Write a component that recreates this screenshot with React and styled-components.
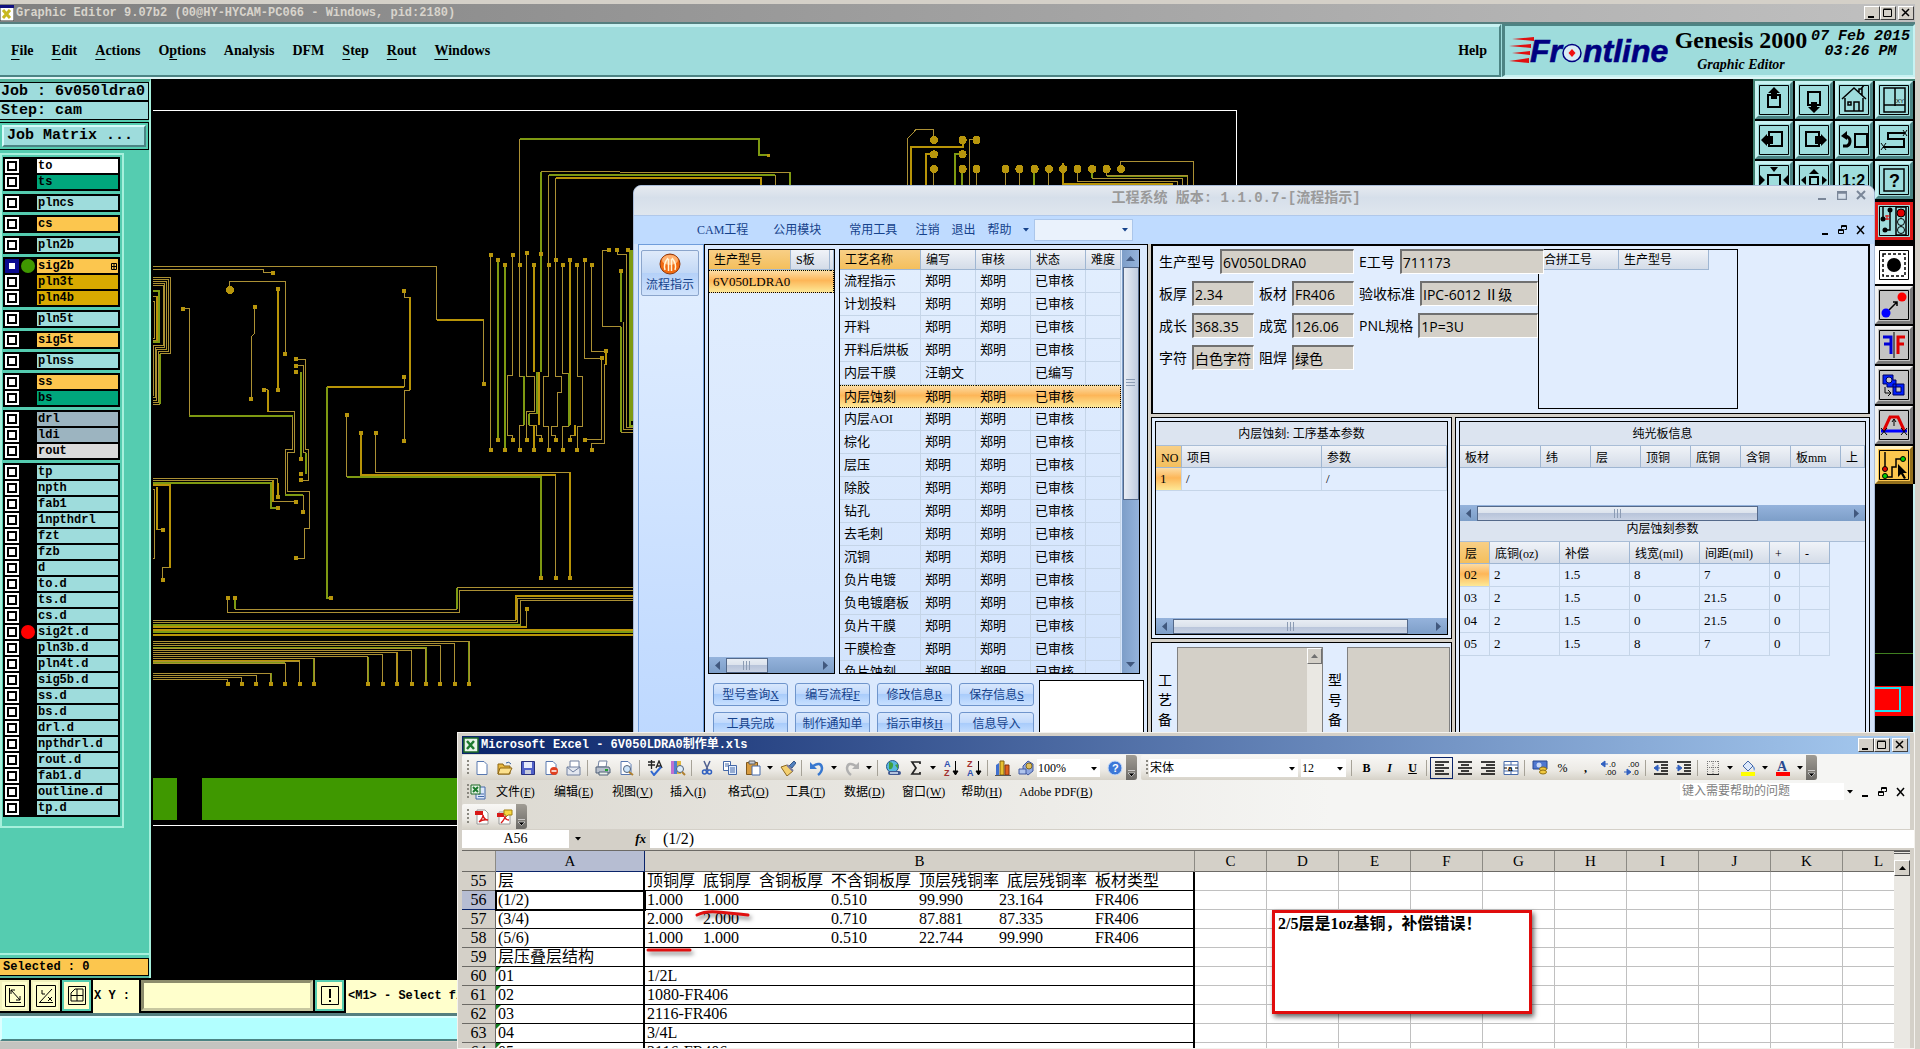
import React from "react";
import styled, { createGlobalStyle, css } from "styled-components";

const serif = `"Liberation Serif", "Noto Sans CJK SC", serif`;
const mono = `"Liberation Mono", "Noto Sans CJK SC", monospace`;
const sans = `"Open Sans", "Noto Sans CJK SC", sans-serif`;

const GlobalStyle = createGlobalStyle`
  *, *::before, *::after { box-sizing: border-box; }
  body { margin: 0; background: #000; overflow: hidden; }
  button, input, select, textarea { font: inherit; color: inherit; margin: 0; padding: 0; border: 0; border-radius: 0; background: none; }
  table { border-collapse: separate; border-spacing: 0; table-layout: fixed; }
  th { font-weight: normal; text-align: left; }
  th, td { padding: 0; }
  svg { display: block; flex: none; }
`;

/* ---------- data ---------- */

const layerColors = {
  white: "#ffffff",
  green: "#00a67c",
  aqua: "#9edcdc",
  orange: "#fcc64e",
  gold: "#d8aa00",
  slate: "#9cb4c0",
  grey: "#dadada",
};

const layerGroups = [
  [["to", "white"], ["ts", "green"]],
  [["plncs", "aqua"]],
  [["cs", "orange"]],
  [["pln2b", "aqua"]],
  [["sig2b", "orange", "#3f9800"], ["pln3t", "gold"], ["pln4b", "gold"]],
  [["pln5t", "aqua"]],
  [["sig5t", "orange"]],
  [["plnss", "aqua"]],
  [["ss", "orange"], ["bs", "green"]],
  [["drl", "slate"], ["ldi", "slate"], ["rout", "grey"]],
  [
    ["tp", "aqua"], ["npth", "aqua"], ["fab1", "aqua"], ["1npthdrl", "aqua"],
    ["fzt", "aqua"], ["fzb", "aqua"], ["d", "aqua"], ["to.d", "aqua"],
    ["ts.d", "aqua"], ["cs.d", "aqua"], ["sig2t.d", "aqua", "#ff0000"],
    ["pln3b.d", "aqua"], ["pln4t.d", "aqua"], ["sig5b.d", "aqua"],
    ["ss.d", "aqua"], ["bs.d", "aqua"], ["drl.d", "aqua"],
    ["npthdrl.d", "aqua"], ["rout.d", "aqua"], ["fab1.d", "aqua"],
    ["outline.d", "aqua"], ["tp.d", "aqua"],
  ],
];

const genesisMenu = [
  ["", "F", "ile"], ["", "E", "dit"], ["", "A", "ctions"], ["O", "p", "tions"],
  ["Analysis", "", ""], ["DFM", "", ""], ["", "S", "tep"], ["", "R", "out"], ["", "W", "indows"],
];

const steps = [
  ["流程指示", "郑明", "郑明", "已审核"],
  ["计划投料", "郑明", "郑明", "已审核"],
  ["开料", "郑明", "郑明", "已审核"],
  ["开料后烘板", "郑明", "郑明", "已审核"],
  ["内层干膜", "汪朝文", "", "已编写"],
  ["内层蚀刻", "郑明", "郑明", "已审核"],
  ["内层AOI", "郑明", "郑明", "已审核"],
  ["棕化", "郑明", "郑明", "已审核"],
  ["层压", "郑明", "郑明", "已审核"],
  ["除胶", "郑明", "郑明", "已审核"],
  ["钻孔", "郑明", "郑明", "已审核"],
  ["去毛刺", "郑明", "郑明", "已审核"],
  ["沉铜", "郑明", "郑明", "已审核"],
  ["负片电镀", "郑明", "郑明", "已审核"],
  ["负电镀磨板", "郑明", "郑明", "已审核"],
  ["负片干膜", "郑明", "郑明", "已审核"],
  ["干膜检查", "郑明", "郑明", "已审核"],
  ["负片蚀刻", "郑明", "郑明", "已审核"],
];

const actions = [
  ["型号查询", "X"], ["编写流程", "F"], ["修改信息", "R"], ["保存信息", "S"],
  ["工具完成", ""], ["制作通知单", ""], ["指示审核", "H"], ["信息导入", ""],
];

const etchRows = [
  ["02", "2", "1.5", "8", "7", "0", ""],
  ["03", "2", "1.5", "0", "21.5", "0", ""],
  ["04", "2", "1.5", "0", "21.5", "0", ""],
  ["05", "2", "1.5", "8", "7", "0", ""],
];

const excelMenu = [
  ["文件", "F"], ["编辑", "E"], ["视图", "V"], ["插入", "I"], ["格式", "O"],
  ["工具", "T"], ["数据", "D"], ["窗口", "W"], ["帮助", "H"], ["Adobe PDF", "B"],
];

const sheetRows = [
  { n: 55, a: "层", head: ["顶铜厚", "底铜厚", "含铜板厚", "不含铜板厚", "顶层残铜率", "底层残铜率", "板材类型"] },
  { n: 56, a: "(1/2)", nums: ["1.000", "1.000", "", "0.510", "99.990", "23.164", "FR406"] },
  { n: 57, a: "(3/4)", nums: ["2.000", "2.000", "", "0.710", "87.881", "87.335", "FR406"] },
  { n: 58, a: "(5/6)", nums: ["1.000", "1.000", "", "0.510", "22.744", "99.990", "FR406"] },
  { n: 59, a: "层压叠层结构", b: "" },
  { n: 60, a: "01", b: "1/2L", flag: true },
  { n: 61, a: "02", b: "1080-FR406", flag: true },
  { n: 62, a: "03", b: "2116-FR406", flag: true },
  { n: 63, a: "04", b: "3/4L", flag: true },
  { n: 64, a: "05", b: "2116-FR406", flag: true },
];

/* ---------- shared parts ---------- */

const WinButton = styled.button`
  display: flex;
  align-items: center;
  justify-content: center;
  width: 16px;
  height: 14px;
  background: #d4d0c8;
  border: 1px solid;
  border-color: #fff #404040 #404040 #fff;
`;

const WinButtons = styled.div`
  display: flex;
  margin-left: auto;
  & > :last-child { margin-left: 2px; }
`;

const ClassicButtons = () => (
  <WinButtons>
    <WinButton aria-label="Minimize">
      <svg width="10" height="10" viewBox="0 0 10 10"><path d="M1 8h6v2H1z" /></svg>
    </WinButton>
    <WinButton aria-label="Maximize">
      <svg width="10" height="10" viewBox="0 0 10 10"><path d="M.5 1.5h8v7h-8zM.5 1h8" fill="none" stroke="#000" /></svg>
    </WinButton>
    <WinButton aria-label="Close">
      <svg width="10" height="10" viewBox="0 0 10 10"><path d="M1 1l7 7M8 1l-7 7" stroke="#000" strokeWidth="1.5" /></svg>
    </WinButton>
  </WinButtons>
);

const MdiButton = styled.button`
  width: 18px;
  height: 16px;
  display: flex;
  justify-content: center;
  align-items: center;
`;

const MdiButtons = () => (
  <>
    <MdiButton aria-label="Minimize sheet">
      <svg width="10" height="10"><path d="M2 8h6v2H2z" /></svg>
    </MdiButton>
    <MdiButton aria-label="Restore sheet">
      <svg width="10" height="10" fill="none" stroke="#000">
        <path d="M3.5 3.5v-3h5v4h-2M3 1.5h6M.5 4.5h5v4h-5zM1 5.5h5" />
      </svg>
    </MdiButton>
    <MdiButton aria-label="Close sheet">
      <svg width="10" height="10"><path d="M1 1l7 8M8 1l-7 8" stroke="#000" strokeWidth="1.5" /></svg>
    </MdiButton>
  </>
);

/* ---------- Genesis window ---------- */

const Desktop = styled.main`
  position: relative;
  height: 100vh;
  overflow: hidden;
  display: flex;
  flex-direction: column;
  background: #d4d0c8;
  padding-right: 5px;
`;

const GenesisTitle = styled.header`
  display: flex;
  align-items: center;
  height: 24px;
  flex: none;
  border-top: 4px solid #d4d0c8;
  border-bottom: 2px solid #557f7f;
  background: linear-gradient(90deg, #808080, #c0c0c0);
  color: #d8d4cc;
  font: bold 12px/18px ${mono};
  gap: 2px;
  padding-right: 1px;
`;

const GenesisHeader = styled.div`
  display: flex;
  height: 55px;
  flex: none;
  background: #9edcdc;
  border-bottom: 2px solid #dff6f6;
`;

const MenuBar = styled.nav`
  flex: 1;
  display: flex;
  align-items: center;
  gap: 18px;
  padding: 0 12px 0 11px;
  border-top: 3px solid #c8f2f2;
  border-bottom: 2px solid #4c8484;
  border-right: 2px solid #4c8484;
  font: bold 14px/18px ${serif};
`;

const MenuItem = styled.button`
  height: 20px;
  text-underline-offset: 4px;
  &:last-child { margin-left: auto; }
`;

const Brand = styled.div`
  display: flex;
  width: 413px;
  margin-left: 1px;
  padding-left: 4px;
  border: 2px solid;
  border-color: #4c8484 #c8f2f2 #c8f2f2 #4c8484;
  border-left-width: 3px;
`;

const BrandName = styled.div`
  width: 140px;
  padding-top: 1px;
  text-align: center;
  font: bold 24px/26px ${serif};
  em { display: block; font-size: 14px; line-height: 24px; }
`;

const Clock = styled.time`
  text-align: center;
  white-space: nowrap;
  font: italic bold 15px/15px ${mono};
  padding-top: 3px;
`;

const GenesisBody = styled.div`
  flex: 1;
  min-height: 0;
  display: flex;
  background: #000;
`;

const LeftPanel = styled.aside`
  width: 151px;
  flex: none;
  display: flex;
  flex-direction: column;
  background: #55ccb0;
  border-right: 2px solid #a6f0dc;
  border-top: 3px solid #54b49c;
  font: bold 15px/18px ${mono};
  color: #000;
`;

const JobLine = styled.div`
  height: 19px;
  padding-left: 1px;
  white-space: pre;
  background: #9edcdc;
  border: 1px solid #000;
  border-left: 0;
  line-height: 18px;
`;

const MatrixFrame = styled.div`
  margin: 2px 0 0 0;
  padding: 2px;
  height: 28px;
  border: 1px solid #000;
  border-left: 0;
`;

const MatrixButton = styled.button`
  width: 100%;
  height: 22px;
  padding-left: 3px;
  text-align: left;
  background: #9edcdc;
  border: 2px solid;
  border-color: #d4fafa #4c8484 #4c8484 #d4fafa;
`;

const LayerBox = styled.div`
  width: 122px;
  margin: 4px 0 0 1px;
  padding: 2px 2px 9px 1px;
  display: flex;
  flex-direction: column;
  gap: 3px;
  border: 1px solid #000;
  outline: 2px solid #a6f0dc;
  outline-offset: -1px;
  background: #55ccb0;
`;

const LayerGroup = styled.div`
  background: #000;
  padding: 1px;
`;

const LayerRow = styled.label`
  display: grid;
  grid-template-columns: 14px 18px 1fr;
  align-items: center;
  height: 16px;
  padding: 0 1px;
  font: bold 12px/14px ${mono};
`;

const LayerCheck = styled.input`
  appearance: none;
  width: 14px;
  height: 14px;
  background: #fff;
  border: 2px solid ${(p) => (p.$active ? "#0a0a90" : "#fff")};
  box-shadow: inset 0 0 0 2px ${(p) => (p.$active ? "#0a0a90" : "#000")};
`;

const LayerDot = styled.span`
  justify-self: center;
  width: 14px;
  height: 14px;
  border-radius: 50%;
  background: ${(p) => p.$color || "transparent"};
`;

const LayerName = styled.span`
  display: flex;
  justify-content: space-between;
  align-items: center;
  height: 14px;
  padding: 0 1px;
  background: ${(p) => layerColors[p.$tone]};
`;

const Selected = styled.div`
  margin: auto 0 0;
  height: 25px;
  padding: 3px 0;
  border-top: 2px solid #a6f0dc;
  border-bottom: 2px solid #54b49c;
  font: bold 12px/16px ${mono};
  span { display: block; padding-left: 3px; background: #fcc64e; border: 1px solid #000; border-left: 0; }
`;

const Board = styled.svg`
  flex: 1;
  min-width: 0;
  height: 100%;
  overflow: hidden;
  shape-rendering: crispEdges;
  path { fill: none; vector-effect: non-scaling-stroke; }
`;

const ToolColumn = styled.aside`
  width: 162px;
  display: flex;
  flex-direction: column;
  border-left: 2px solid #3f7f70;
  border-top: 2px solid #3f7f70;
`;

const ToolGrid = styled.div`
  display: grid;
  grid-template-columns: repeat(4, 38px);
  gap: 2px;
`;

const ToolStack = styled.div`
  display: grid;
  grid-template-columns: 38px;
  gap: 2px;
  margin-left: auto;
  margin-right: 2px;
  margin-top: 3px;
  & > :first-child { margin-bottom: 4px; }
`;

const Tool = styled.button`
  display: flex;
  align-items: center;
  justify-content: center;
  width: 38px;
  height: 38px;
  background: ${(p) => p.$bg || "#9edcdc"};
  border: 3px solid;
  border-color: ${(p) => p.$edge || "#c8f2f2 #4c8484 #4c8484 #c8f2f2"};
`;

const Radar = styled.svg`
  flex: 1;
  width: 100%;
  min-height: 0;
  border-right: 2px solid #c8f2f2;
`;

const StatusBar = styled.footer`
  display: flex;
  height: 35px;
  flex: none;
  background: #000;
  border-top: 2px solid #000;
  gap: 2px;
  font: bold 12px/32px ${mono};
`;

const StatusButton = styled.button`
  display: flex;
  align-items: center;
  justify-content: center;
  width: 29px;
  height: 31px;
  background: #ffffcc;
  border: 2px solid ${(p) => (p.$on ? "#55ccb0" : "#f2f2bc")};
`;

const CoordLabel = styled.label`
  width: 46px;
  padding-left: 1px;
  background: #ffffcc;
  white-space: pre;
`;

const CoordInput = styled.input`
  width: 172px;
  height: 31px;
  background: #ffffcc;
  border: 3px solid;
  border-color: #8c8c6c #c8c8a0 #c8c8a0 #8c8c6c;
`;

const StatusText = styled.div`
  flex: 1;
  padding-left: 2px;
  background: #ffffcc;
`;

const MessageBar = styled.div`
  height: 36px;
  flex: none;
  border-top: 3px solid #557f7f;
  border-bottom: 7px solid #c4c4c0;
  div { height: 25px; background: #b2ffff; border: 2px solid; border-color: #dff #4c8484 #4c8484 #dff; }
`;

const toolIcons = {
  up: <><path d="M9 10h12v12H9z" fill="none" stroke="#000" strokeWidth="2" /><path d="M12 14V8H9l6-6 6 6h-3v6z" /></>,
  down: <><path d="M9 7h12v13H9z" fill="none" stroke="#000" strokeWidth="2" /><path d="M12 17h6v5h3l-6 6-6-6h3z" /></>,
  home: <path d="M3 14L15 3l12 11M6 13v13h18V13M9 17h3v3H9zM15 26v-9h5v9M20 8V4h3v6M22 4l3-4" fill="none" stroke="#000" strokeWidth="1.5" />,
  layout: <><path d="M5 3h21v24H5zM16 3v18M5 20h21" fill="none" stroke="#000" strokeWidth="1.5" /><text x="17" y="18" fontSize="6" fontFamily="Liberation Sans">XY</text></>,
  left: <><path d="M10 7h13v14H10z" fill="none" stroke="#000" strokeWidth="2" /><path d="M2 15l6-6v2h6v8H8v2z" /></>,
  right: <><path d="M7 7h13v14H7z" fill="none" stroke="#000" strokeWidth="2" /><path d="M28 15l-6-6v2h-6v8h6v2z" /></>,
  undo: <><path d="M16 9h12v13H16z" fill="none" stroke="#000" strokeWidth="2" /><path d="M4 21h4q3-1 3-5t-5-5" fill="none" stroke="#000" strokeWidth="3" /><path d="M2 11l6-5v9z" /></>,
  trace: <><path d="M26 8H9v6h16v8H4" fill="none" stroke="#000" strokeWidth="2" /><path d="M24 5l4 6m0-6l-4 6M2 18l5 7m0-7l-5 7" stroke="#000" /></>,
  fit: <><path d="M9 10h12v14H9z" fill="none" stroke="#000" strokeWidth="2" /><path d="M11 2h8l-4 5zM1 10l5 5-5 5zM29 10l-5 5 5 5zM11 29h8l-4-4z" /></>,
  expand: <><path d="M11 12h8v8h-8z" fill="none" stroke="#000" strokeWidth="2" /><path d="M10 9l5-5 5 5zM7 11v9l-5-5zM23 11v9l5-5zM10 23l5 5 5-5z" /></>,
  ratio: <text x="3" y="21" fontSize="16" fontWeight="bold" fontFamily="Liberation Sans">1:2</text>,
  help: <><path d="M5 4h20v22H5z" fill="none" stroke="#000" strokeWidth="1.5" /><text x="10" y="22" fontSize="18" fontWeight="bold" fontFamily="Liberation Sans">?</text></>,
  signal: <><path d="M4 1v12M11 5v19H6M17 1h10v28H17z" fill="none" stroke="#000" strokeWidth="1.5" /><path d="M6 10h5M6 13h5M8 9v5" stroke="#e00000" /><circle cx="4" cy="13" r="2.5" /><circle cx="11" cy="4" r="2.5" /><circle cx="6" cy="24" r="2.5" /><circle cx="22" cy="7" r="4" fill="#e00000" stroke="#000" /><circle cx="22" cy="16" r="3.5" fill="none" stroke="#000" /><circle cx="22" cy="24" r="3.5" fill="none" stroke="#000" /></>,
  pad: <><path d="M4 4h22v22H4z" fill="none" stroke="#000" strokeWidth="1.5" strokeDasharray="3 2" /><circle cx="15" cy="15" r="7" /></>,
  points: <><path d="M10 20l8-8m-4 0h4v4" fill="none" stroke="#000" strokeWidth="1.5" /><circle cx="7" cy="23" r="4.5" fill="#0000ff" /><circle cx="23" cy="7" r="4.5" fill="#ff0000" /></>,
  mirror: <><path d="M15 2v26" stroke="#000" /><path d="M4 7h8v17M12 14H5" fill="none" stroke="#0000d8" strokeWidth="3" /><path d="M26 7h-7v17M19 14h6" fill="none" stroke="#e00000" strokeWidth="3" /></>,
  copy: <><path d="M4 5h10v5h3v7H8v-3H4zM14 14h11v11H14z" fill="#0020ff" stroke="#000060" /><circle cx="10" cy="10" r="3" fill="#c4c4c4" stroke="#000060" /><path d="M17 17h5v5h-5z" fill="#c4c4c4" stroke="#000060" /><path d="M6 17v6h5M9 20l3 3-3 3" fill="none" stroke="#000" /></>,
  curve: <><path d="M2 21h26" stroke="#0000ff" strokeWidth="3" /><path d="M5 20l6-13h8l6 13" fill="none" stroke="#e00000" strokeWidth="3" /><path d="M15 16V9m-2 3l2-3 2 3M2 18l6 7m0-7l-6 7M22 18l6 7m0-7l-6 7" stroke="#000" fill="none" /></>,
  route: <><path d="M6 2v16M6 27h7V17h4V9h8" fill="none" stroke="#000" strokeWidth="1.5" /><circle cx="6" cy="19" r="2.5" fill="#e00000" stroke="#000" /><circle cx="6" cy="26" r="2.5" fill="#00d000" stroke="#000" /><circle cx="24" cy="9" r="2.5" fill="#00d000" stroke="#000" /><path d="M19 14l9 9-4 0 3 5-2 1-3-5-3 3z" /></>,
};

const GenesisTool = ({ icon, ...rest }) => (
  <Tool aria-label={icon} {...rest}>
    <svg width="30" height="30" viewBox="0 0 30 30">
      <path d="M.5 .5h29v29H.5z" fill="none" stroke="#000" />
      {toolIcons[icon]}
    </svg>
  </Tool>
);

const busLines = [
  [1415, 988], [1420, 944], [1426, 901], [1432, 858], [1438, 815], [1443, 771], [1449, 728], [1455, 684],
  [1460, 523], [1466, 479], [1472, 436], [1498, 393], [1504, 349], [1510, 306], [1515, 263],
];

const leftPads = [
  [398, 451], [436, 664], [128, 545], [344, 542], [334, 780], [415, 495], [415, 759], [371, 757],
  [793, 498], [793, 725], [793, 892], [1031, 742], [573, 1301], [467, 677], [467, 694], [467, 712],
  [484, 939], [484, 977], [484, 993], [490, 1077], [469, 1197], [415, 1038], [469, 1050], [415, 1067],
  [68, 1123], [68, 1255], [620, 823], [664, 870], [707, 870], [1204, 1248], [1247, 1248], [1291, 1248],
  [263, 1301], [286, 1301], [1160, 1329], [1052, 406], [1075, 417], [1096, 432], [1118, 406], [1139, 432],
  [1160, 401], [1183, 432], [1204, 403], [1226, 432], [1247, 417], [1269, 432], [1291, 417], [1312, 432],
  [1334, 417], [1355, 432], [1408, 392], [1432, 392], [1464, 392], [1444, 448], [1398, 657], [1385, 675],
  [1075, 888], [1118, 888], [1160, 888], [1204, 888], [1247, 888], [1291, 888], [1334, 888],
  [1052, 915], [1096, 915], [1139, 915], [1183, 915], [1226, 915], [1269, 915], [1312, 915], [1355, 915],
];

const bigPads = [
  [724, 150], [790, 150], [822, 150], [724, 193], [790, 193], [724, 237], [790, 237], [822, 237],
  [889, 237], [921, 237], [956, 237], [989, 237], [1022, 237], [1055, 237], [1089, 237], [1122, 237], [1155, 237],
];

const dots = (list) => list.map(([x, y]) => `M${x} ${y}h0.01`).join("");

const BoardView = () => (
  <Board aria-label="Board artwork">
    <g transform="translate(-151 -79)">
      <path d="M153 110.5H1236.5V825.5H153" stroke="#fff" />
      <path d="M153 799H177M202 799H1100" stroke="#3f9800" strokeWidth="42" />
      <g transform="matrix(.33333 0 0 .3827 140 100)">
        <g stroke="#ab9034" strokeWidth="1">
          <path d="M39 435H890V574H1031V742M39 443H371V451H398M270 490V474H436V664M128 545H148V825" />
          <path d="M458 825V914H436V1032M490 1032V1077M344 542V610L334 618V780" />
          <path d="M371 757H384V814H463V922H442V1023H508V1119H493V1197H469" />
          <path d="M793 498V515H810V759H793V892M793 725V750" />
          <path d="M467 677H497V914H505V993H484M467 694H491V922H499" />
          <path d="M39 463H91V663H61M61 795H39M39 469H85V658H56V790H39M39 474H80V652H51V784H39M39 480H75V647H46V778H39M39 486H70V641H42V772H39" />
          <path d="M39 513H53V628H39M39 526H44V622H39" />
          <path d="M39 990H414V1040M39 995H400V1050H469M39 1018H44V1197H39M90 1222H68V1255M51 1123H68" />
          <path d="M707 870V973H1290V1248M1247 979V1248M620 823V985" />
          <path d="M263 1301V1339H958V1282H1480M286 1331H950M950 1274H1480" />
          <path d="M39 1360H1128V1296H1480M39 1366H1134V1302H1480M1142 1372V1308H1480M1160 1378V1329" />
          <path d="M1052 406V915M1118 406V721H1103V877H1118V888M1139 432V102M1139 432V722H1153M1153 850H1139V915" />
          <path d="M1160 401V722H1184V815H1160V888M1190 820H1167M1167 850H1190V877H1204V888" />
          <path d="M1226 196V722H1210V853H1226V915M1247 203V722H1265V765H1253V853H1235V877H1247V888" />
          <path d="M1269 432V714H1286M1286 853H1269V915M1306 877H1291V888M1312 432V722H1328V853H1312V915" />
          <path d="M1334 417V675H1385V888H1334M1355 432V657H1398V692H1393V898H1355V915" />
          <path d="M1408 392H1387V592H1444M1444 868H1480M1450 580V862H1480M1432 392V403H1460V857H1480" />
          <path d="M1204 188H1440" />
        </g>
        <g stroke="#b89408" strokeWidth="2">
          <path d="M415 495V759M384 757V814M810 515V759M793 750H561M51 513V630M414 1000V1040M400 995V1050" />
          <path d="M39 1006H90V1222M51 1012V1123M663 870V979H1247M1290 973V1248M890 574H1031" />
          <path d="M39 1378H1160M39 1385H1480M39 1398H1480M1183 432V712M1197 712V850M1183 850V915M1291 417V850M1306 850V877" />
          <path d="M1247 203H1440M1398 657V692M39 1466H479M771 1443V1525M1128 1360V1296H1480" />
        </g>
        <g stroke="#7e9a12" strokeWidth="2">
          <path d="M148 825H458M484 712V939M499 922V977M561 750V1301H573M61 663V795M39 499H58V633H39M436 1032H490" />
          <path d="M39 1001H393V1067H415M620 985H1204V1248M286 1301V1331M950 1331V1274" />
          <path d="M1075 417V888M1096 432V915M1204 188V712M1139 102H1440M1226 196H1440M1153 722V850M1190 712V820M1167 820V850M1286 714V853" />
          <path d="M1444 448V580M1444 592V868M1470 392V852H1480M1477 392V840M39 1372H1142M39 1391H1480M39 1432H858V1525M39 1472H436M988 1415V1525M523 1460V1525M684 1455V1525M393 1498V1525" />
        </g>
        <path d={busLines.map(([y, x]) => `M39 ${y}H${x}V1525`).join("")} stroke="#ab9034" />
        <path d={dots(leftPads) + dots(busLines.map(([, x]) => [x, 1525]))} stroke="#b8960c" strokeWidth="4" strokeLinecap="square" />
        <path d="M270 496h0.01" stroke="#b8960c" strokeWidth="8" strokeLinecap="round" />
      </g>
      <g transform="matrix(.43367 0 0 .33333 620 90)">
        <path d="M0 147H320V195H345M0 255H358M392 247V286M772 286V191H790M789 286V237M954 237V286M1089 237V265M1122 259H1308" stroke="#7e9a12" strokeWidth="2" />
        <path d="M0 247H392M358 255V286M723 150V118H683L664 145V286M723 237V286M806 286V149H822M822 237V286M889 237V286M921 237V286M988 237V286" stroke="#ab9034" />
        <path d="M1055 237V274H1285V286M1089 265H1297V286M1122 237V257H1308V286M1155 237V214H1323V286" stroke="#ab9034" />
        <path d="M0 264H325V286M670 286V170H790V150M706 286V191H723M1022 220V283H1275" stroke="#b89408" strokeWidth="2" />
        <path d={dots(bigPads)} stroke="#b8960c" strokeWidth="8" strokeLinecap="round" />
        <path d={dots(bigPads)} stroke="#b8960c" strokeWidth="6" strokeLinecap="square" />
        <path d="M343 196h0.01" stroke="#b8960c" strokeWidth="3" strokeLinecap="square" />
      </g>
    </g>
  </Board>
);

const Logo = () => (
  <svg width="162" height="44" viewBox="0 0 162 44" aria-label="Frontline">
    <path d="M3 13l22-2v4zM0 20l22-2v4zM3 27l18-2v4zM0 35l20-3v5z" fill="#e01010" />
    <g fontFamily="Liberation Sans" fontWeight="bold" fontStyle="italic" fontSize="32" fill="#000080" stroke="#000080" strokeWidth=".6">
      <text x="21" y="36">Fr</text>
      <text x="74" y="36">ntline</text>
    </g>
    <ellipse cx="63" cy="27" rx="9" ry="8.500" fill="#d8ecf4" stroke="#000080" strokeWidth="1.500" />
    <path d="M63 23l3.500 4-3.500 4-3.500-4z" fill="#f01010" />
  </svg>
);

/* ---------- process window ---------- */

const FlowWindow = styled.section`
  position: absolute;
  left: 633px;
  right: 45px;
  top: 185px;
  bottom: 0;
  display: flex;
  flex-direction: column;
  padding: 0 4px;
  background: #d3e3fa;
  border: 1px solid #a9bcd8;
  border-radius: 8px 8px 0 0;
  overflow: hidden;
  font: 12px/16px ${serif};
  color: #000;
`;

const FlowTitle = styled.header`
  display: flex;
  align-items: center;
  justify-content: center;
  height: 30px;
  flex: none;
  margin: 0 -4px;
  padding: 0 36px 6px 0;
  background: linear-gradient(#e6eaf0, #d6dfea 40%, #dfe6ee);
  border-bottom: 1px solid #b0c8ea;
  color: #9a9a9a;
  font: bold 14px/18px ${mono};
`;

const FlowTitleButtons = styled.div`
  position: absolute;
  right: 8px;
  top: 3px;
  display: flex;
  gap: 9px;
  button { width: 10px; height: 12px; }
`;

const Ribbon = styled.nav`
  display: flex;
  align-items: center;
  height: 28px;
  flex: none;
  margin: 0 -4px;
  padding: 0 4px 0 63px;
  background: #bfdbff;
  color: #15428b;
`;

const RibbonItem = styled.button`
  margin-right: ${(p) => p.$gap || 12}px;
  line-height: 16px;
`;

const RibbonSelect = styled.span`
  position: relative;
  width: 99px;
  height: 22px;
  margin: 0 auto 0 5px;
  border: 1px solid #abc6ea;
  background: #eaf2fc;
  select { appearance: none; width: 100%; height: 100%; }
  svg { position: absolute; right: 4px; top: 8px; pointer-events: none; }
`;

const Arrow = ({ color = "#000" }) => (
  <svg width="6" height="4" viewBox="0 0 6 4"><path d="M0 0h6L3 3.5z" fill={color} /></svg>
);

const FlowBody = styled.div`
  flex: 1;
  min-height: 0;
  display: flex;
  background: #d4d0c8;
`;

const Outlook = styled.aside`
  width: 66px;
  flex: none;
  padding: 5px 2px;
  border: 1px solid #6f9ddb;
  background: linear-gradient(#e3efff, #c4dcff 50%, #a8ccff);
`;

const OutlookButton = styled.button`
  display: flex;
  flex-direction: column;
  align-items: center;
  gap: 2px;
  width: 58px;
  height: 46px;
  padding-top: 2px;
  border: 1px solid #8ba5cc;
  border-radius: 2px;
  background: linear-gradient(#dfeafa, #c2d8f6 50%, #b4d0f8 50%, #cfe2fc);
  color: #15428b;
`;

const StepArea = styled.div`
  width: 444px;
  flex: none;
  padding: 4px 3px 0;
  border: 1px solid #000;
  background: #dbe9fd;
  margin-right: 3px;
`;

const Lists = styled.div`
  display: flex;
  gap: 4px;
`;

const ListFrame = styled.div`
  display: flex;
  width: ${(p) => p.$w}px;
  height: 425px;
  flex-direction: ${(p) => p.$dir || "row"};
  border: 1px solid #000;
  background: linear-gradient(#e2eefe, #d3e4fd);
  overflow: hidden;
`;

const amber = css`
  background: linear-gradient(#fcdca4, #fdb658 45%, #fde896);
`;

const Grid = styled.table`
  width: ${(p) => (p.$w ? p.$w + "px" : "100%")};
  flex: none;
  th {
    height: ${(p) => p.$head || 20}px;
    padding-left: 5px;
    white-space: nowrap;
    overflow: hidden;
    line-height: 18px;
    vertical-align: bottom;
    background: linear-gradient(#f0f3f8, #d4dce8);
    border-right: 1px solid #9fb6d2;
    border-bottom: 1px solid #9fb6d2;
  }
  th[data-hot] { background: linear-gradient(#f8cf86, #f4bf5c); }
  td {
    height: 23px;
    padding-left: 4px;
    white-space: nowrap;
    overflow: hidden;
    font-size: 13px;
    line-height: 20px;
    border-right: 1px solid #c5d5e8;
    border-bottom: 1px solid #c5d5e8;
  }
  td[data-hot] { ${amber} }
`;

const StepRow = styled.tr`
  ${(p) => p.$current && css`
    td {
      ${amber}
      border-top: 1px dotted #000;
      border-bottom: 1px dotted #000;
      border-right-color: transparent;
    }
    td:last-child { border-right: 1px dotted #000; }
  `}
`;

const VTrack = styled.div`
  width: 17px;
  margin-left: auto;
  display: flex;
  flex-direction: column;
  align-items: center;
  background: linear-gradient(90deg, #7d9ec8, #95b3dc);
  padding-bottom: 5px;
`;

const VThumb = styled.div`
  width: 16px;
  height: 233px;
  margin: 5px 0 auto;
  display: flex;
  align-items: center;
  justify-content: center;
  border: 1px solid #54698a;
  background: linear-gradient(90deg, #e8edf4, #c0cce0);
`;

const HTrack = styled.div`
  display: flex;
  align-items: center;
  height: 16px;
  flex: none;
  padding: 0 6px;
  background: linear-gradient(#95b3dc, #7d9ec8);
  margin-top: ${(p) => p.$push ? "auto" : 0};
`;

const HThumb = styled.div`
  width: ${(p) => p.$w};
  height: 15px;
  margin: 0 auto 0 6px;
  display: flex;
  align-items: center;
  justify-content: center;
  border: 1px solid #54698a;
  background: linear-gradient(#e8edf4, #dbe2ec 50%, #b8c4da 50%, #c8d2e4);
`;

const HScroll = ({ size, push }) => (
  <HTrack $push={push}>
    <svg width="5" height="9"><path d="M5 0v9L0 4.5z" fill="#41587e" /></svg>
    <HThumb $w={size}>
      <svg width="8" height="9"><path d="M.5 0v9M3.5 0v9M6.5 0v9" stroke="#8c9cb4" /></svg>
    </HThumb>
    <svg width="5" height="9"><path d="M0 0v9l5-4.5z" fill="#41587e" /></svg>
  </HTrack>
);

const ActionArea = styled.div`
  display: flex;
  justify-content: space-between;
  margin-top: 6px;
  padding-left: 5px;
`;

const ActionGrid = styled.div`
  display: grid;
  grid-template-columns: repeat(4, 75px);
  gap: 6px 7px;
  align-content: start;
  padding-top: 3px;
`;

const ActionButton = styled.button`
  height: 23px;
  border: 1px solid #6f95cc;
  border-radius: 3px;
  background: linear-gradient(#d8e7fc, #c2dafc 45%, #a9ccfb 50%, #c8e0ff);
  color: #15428b;
  white-space: nowrap;
`;

const NoteArea = styled.textarea`
  display: block;
  width: 105px;
  height: 120px;
  border: 1px solid #000;
  background: #fff;
  resize: none;
`;

const Details = styled.div`
  flex: 1;
  min-width: 0;
  display: flex;
  flex-direction: column;
  gap: 3px;
`;

const TopPanel = styled.div`
  display: flex;
  height: 170px;
  flex: none;
  padding: 3px 0 0 6px;
  border: 2px solid #000;
  border-bottom-width: 1px;
  background: #e1edfe;
`;

const Form = styled.form`
  width: 379px;
  flex: none;
  display: flex;
  flex-direction: column;
  gap: 7px;
  font: 14px/20px ${sans};
`;

const FormRow = styled.div`
  display: flex;
  gap: 5px;
`;

const Field = styled.label`
  display: flex;
  align-items: center;
  gap: 5px;
  white-space: nowrap;
  flex: none;
`;

const FieldInput = styled.input`
  position: relative;
  width: ${(p) => p.$w}px;
  height: 25px;
  padding-left: 1px;
  background: #d4d0c8;
  border: 2px solid;
  border-color: #707070 #fff #fff #707070;
  border-right-width: 1px;
  border-bottom-width: 1px;
`;

const MergeBox = styled.div`
  width: 200px;
  height: 160px;
  border: 1px solid #000;
`;

const BottomPanels = styled.div`
  flex: 1;
  min-height: 0;
  display: flex;
  gap: 3px;
`;

const LeftStack = styled.div`
  width: 301px;
  flex: none;
  display: flex;
  flex-direction: column;
  gap: 3px;
`;

const Panel = styled.div`
  display: flex;
  flex: ${(p) => (p.$h ? "none" : 1)};
  height: ${(p) => (p.$h ? p.$h + "px" : "auto")};
  min-width: 0;
  padding: 3px;
  border: 1px solid #000;
  background: #e1edfe;
`;

const PanelInner = styled.div`
  flex: 1;
  min-width: 0;
  display: flex;
  flex-direction: column;
  border: 1px solid #000;
  overflow: hidden;
`;

const PanelTitle = styled.h2`
  margin: 0;
  height: ${(p) => (p.$low ? 21 : 24)}px;
  flex: none;
  text-align: center;
  font: 12px/16px ${serif};
  padding-top: ${(p) => (p.$low ? 0 : 4)}px;
  background: #dce4f0;
  border-bottom: 1px solid #a9bdd6;
`;

const Blank = styled.div`
  height: 37px;
  flex: none;
`;

const RemarkPanel = styled(Panel)`
  padding: 4px 0 0 6px;
  gap: 5px;
  font: 14px/20px ${sans};
  background: #e1edfe;
`;

const RemarkLabel = styled.label`
  width: 14px;
  padding-top: 23px;
  flex: none;
`;

const RemarkBox = styled.div`
  display: flex;
  width: ${(p) => p.$w}px;
  flex: none;
  height: 100%;
  background: #d4d0c8;
  border: 1px solid #808080;
  textarea { flex: 1; min-width: 0; resize: none; }
`;

const RemarkScroll = styled.div`
  width: 15px;
  background: #eae8e3;
  button {
    display: flex;
    align-items: center;
    justify-content: center;
    width: 15px;
    height: 16px;
    background: #d4d0c8;
    border: 1px solid;
    border-color: #fff #707070 #707070 #fff;
  }
`;

const FormField = ({ label, value, w }) => (
  <Field>
    {label}
    <FieldInput $w={w} defaultValue={value} />
  </Field>
);

const Cols = ({ widths }) => (
  <colgroup>
    {widths.map((w, i) => <col key={i} width={w || undefined} />)}
  </colgroup>
);

const ProcessWindow = () => (
  <FlowWindow>
    <FlowTitle>
      工程系统 版本: 1.1.0.7-[流程指示]
      <FlowTitleButtons>
        <button aria-label="Minimize"><svg width="8" height="10"><path d="M0 8h8v2H0z" fill="#7a8698" /></svg></button>
        <button aria-label="Maximize"><svg width="10" height="9"><path d="M.5.5h9v8h-9zM0 2h10" fill="none" stroke="#7a8698" strokeWidth="1.5" /></svg></button>
        <button aria-label="Close"><svg width="10" height="10"><path d="M1 1l8 8M9 1L1 9" stroke="#7a8698" strokeWidth="2" /></svg></button>
      </FlowTitleButtons>
    </FlowTitle>
    <Ribbon>
      <RibbonItem $gap={25}>CAM工程</RibbonItem>
      <RibbonItem $gap={28}>公用模块</RibbonItem>
      <RibbonItem $gap={18}>常用工具</RibbonItem>
      <RibbonItem>注销</RibbonItem>
      <RibbonItem>退出</RibbonItem>
      <RibbonItem>帮助</RibbonItem>
      <Arrow color="#15428b" />
      <RibbonSelect>
        <select aria-label="搜索"><option></option></select>
        <Arrow color="#15428b" />
      </RibbonSelect>
      <MdiButtons />
    </Ribbon>
    <FlowBody>
      <Outlook>
        <OutlookButton>
          <svg width="22" height="22" viewBox="0 0 22 22">
            <circle cx="11" cy="11" r="10" fill="#f26a10" stroke="#8c3a10" />
            <ellipse cx="11" cy="7" rx="8" ry="5" fill="#ffb070" />
            <path d="M6 17Q4 11 9 5M9.500 18V6M12.500 18V6M16 17q2-6-3-12" fill="none" stroke="#fff6d8" strokeWidth="1.500" />
          </svg>
          流程指示
        </OutlookButton>
      </Outlook>
      <StepArea>
        <Lists>
          <ListFrame $w={127} $dir="column">
            <Grid>
              <Cols widths={[82, 39, 0]} />
              <thead><tr><th data-hot="">生产型号</th><th>S板</th><th /></tr></thead>
              <tbody>
                <StepRow $current><td colSpan={2}>6V050LDRA0</td><td /></StepRow>
              </tbody>
            </Grid>
            <HScroll size="42px" push />
          </ListFrame>
          <ListFrame $w={301}>
            <Grid $w={281}>
              <Cols widths={[81, 55, 55, 55, 35]} />
              <thead>
                <tr><th data-hot="">工艺名称</th><th>编写</th><th>审核</th><th>状态</th><th>难度</th></tr>
              </thead>
              <tbody>
                {steps.map((row, i) => (
                  <StepRow key={row[0]} $current={i === 5}>
                    {row.map((cell, j) => <td key={j}>{cell}</td>)}
                    <td />
                  </StepRow>
                ))}
              </tbody>
            </Grid>
            <VTrack>
              <svg width="9" height="12"><path d="M0 11h9L4.500 6z" fill="#41587e" /></svg>
              <VThumb><svg width="9" height="9"><path d="M0 .5h9M0 3.500h9M0 6.500h9" stroke="#8c9cb4" /></svg></VThumb>
              <svg width="9" height="6"><path d="M0 0h9L4.500 5z" fill="#41587e" /></svg>
            </VTrack>
          </ListFrame>
        </Lists>
        <ActionArea>
          <ActionGrid>
            {actions.map(([name, key]) => (
              <ActionButton key={name}>{name}<u>{key}</u></ActionButton>
            ))}
          </ActionGrid>
          <NoteArea aria-label="备注" />
        </ActionArea>
      </StepArea>
      <Details>
        <TopPanel>
          <Form>
            <FormRow>
              <FormField label="生产型号" value="6V050LDRA0" w={134} />
              <FormField label="E工号" value="711173" w={144} />
            </FormRow>
            <FormRow>
              <FormField label="板厚" value="2.34" w={62} />
              <FormField label="板材" value="FR406" w={62} />
              <FormField label="验收标准" value="IPC-6012 Ⅱ级" w={118} />
            </FormRow>
            <FormRow>
              <FormField label="成长" value="368.35" w={62} />
              <FormField label="成宽" value="126.06" w={62} />
              <FormField label="PNL规格" value="1P=3U" w={120} />
            </FormRow>
            <FormRow>
              <FormField label="字符" value="白色字符" w={62} />
              <FormField label="阻焊" value="绿色" w={62} />
            </FormRow>
          </Form>
          <MergeBox>
            <Grid $w={170}>
              <Cols widths={[80, 90]} />
              <thead><tr><th>合拼工号</th><th>生产型号</th></tr></thead>
            </Grid>
          </MergeBox>
        </TopPanel>
        <BottomPanels>
          <LeftStack>
            <Panel $h={222}>
              <PanelInner>
                <PanelTitle>内层蚀刻: 工序基本参数</PanelTitle>
                <Grid $head={22}>
                  <Cols widths={[26, 140, 0]} />
                  <thead><tr><th data-hot="">NO</th><th>项目</th><th>参数</th></tr></thead>
                  <tbody><tr><td data-hot="">1</td><td>/</td><td>/</td></tr></tbody>
                </Grid>
                <HScroll size="235px" push />
              </PanelInner>
            </Panel>
            <RemarkPanel>
              <RemarkLabel htmlFor="craft">工艺备</RemarkLabel>
              <RemarkBox $w={146}>
                <textarea id="craft" />
                <RemarkScroll>
                  <button aria-label="Scroll up">
                    <svg width="7" height="4"><path d="M0 4h7L3.500 0z" fill="#707070" /></svg>
                  </button>
                </RemarkScroll>
              </RemarkBox>
              <RemarkLabel htmlFor="model">型号备</RemarkLabel>
              <RemarkBox $w={103}>
                <textarea id="model" />
              </RemarkBox>
            </RemarkPanel>
          </LeftStack>
          <Panel>
            <PanelInner>
              <PanelTitle>纯光板信息</PanelTitle>
              <Grid $head={22}>
                <Cols widths={[81, 50, 50, 50, 50, 50, 50, 0]} />
                <thead>
                  <tr>{["板材", "纬", "层", "顶铜", "底铜", "含铜", "板mm", "上"].map((h) => <th key={h}>{h}</th>)}</tr>
                </thead>
              </Grid>
              <Blank />
              <HScroll size="281px" />
              <PanelTitle $low>内层蚀刻参数</PanelTitle>
              <Grid $w={370} $head={22}>
                <Cols widths={[30, 70, 70, 70, 70, 30, 30]} />
                <thead>
                  <tr>
                    <th data-hot="">层</th>
                    {["底铜(oz)", "补偿", "线宽(mil)", "间距(mil)", "+", "-"].map((h) => <th key={h}>{h}</th>)}
                  </tr>
                </thead>
                <tbody>
                  {etchRows.map((row, i) => (
                    <tr key={row[0]}>
                      {row.map((cell, j) => <td key={j} data-hot={i === 0 && j === 0 ? "" : undefined}>{cell}</td>)}
                    </tr>
                  ))}
                </tbody>
              </Grid>
            </PanelInner>
          </Panel>
        </BottomPanels>
      </Details>
    </FlowBody>
  </FlowWindow>
);

/* ---------- Excel window ---------- */

const ExcelFrame = styled.section`
  position: absolute;
  left: 457px;
  right: 5px;
  top: 732px;
  bottom: 0;
  display: flex;
  flex-direction: column;
  padding: 0 4px;
  background: #d4d0c8;
  border: 1px solid #f4f2ee;
  overflow: hidden;
  font: 12px/16px ${serif};
  color: #000;
`;

const ExcelTitle = styled.header`
  display: flex;
  align-items: center;
  gap: 2px;
  height: 18px;
  flex: none;
  margin-top: 3px;
  padding: 0 2px 0 1px;
  background: linear-gradient(90deg, #0a246a, #a6caf0);
  color: #fff;
  font: bold 12px/18px ${mono};
`;

const BarArea = styled.div`
  display: flex;
  flex-direction: column;
  flex: none;
  background: linear-gradient(90deg, #dcd9d1, #f5f5f3 60%);
`;

const BarRow = styled.div`
  display: flex;
  align-items: center;
  height: ${(p) => p.$h || 25}px;
  margin-top: ${(p) => (p.$gap ? 1 : 0)}px;
`;

const Grip = styled.span`
  width: 2px;
  height: 16px;
  margin: 0 1px 0 5px;
  background: repeating-linear-gradient(#8a8880 0 2px, transparent 2px 4px);
`;

const ToolBar = styled.div`
  display: flex;
  align-items: center;
  height: 25px;
  margin-right: 4px;
  background: linear-gradient(#f8f7f5, #eceae5 60%, #d6d2c8);
  border-radius: 2px;
`;

const IconButton = styled.button`
  display: flex;
  align-items: center;
  justify-content: center;
  width: 23px;
  height: 22px;
  border: 1px solid ${(p) => (p.$on ? "#0a246a" : "transparent")};
`;

const DropButton = styled.button`
  display: flex;
  align-items: center;
  justify-content: center;
  width: 12px;
  height: 22px;
`;

const Sep = styled.span`
  width: 1px;
  height: 16px;
  margin: 0 3px 0 2px;
  background: #a6a298;
`;

const BarEnd = styled.span`
  display: flex;
  align-items: flex-end;
  justify-content: center;
  width: 11px;
  height: 25px;
  padding-bottom: 3px;
  border-radius: 0 3px 3px 0;
  background: linear-gradient(#a09c94, #6c6a66);
`;

const Combo = styled.span`
  position: relative;
  width: ${(p) => p.$w}px;
  height: 18px;
  margin-right: 3px;
  background: #fff;
  select { appearance: none; width: 100%; height: 100%; padding-left: 1px; }
  svg { position: absolute; right: 3px; top: 8px; pointer-events: none; }
`;

const MenuStrip = styled.nav`
  display: flex;
  gap: 16px;
  padding-left: 10px;
  button { min-width: 42px; text-align: left; white-space: nowrap; }
`;

const AskBox = styled.input`
  width: 164px;
  height: 17px;
  margin-left: auto;
  padding-left: 2px;
  background: #fff;
  &::placeholder { color: #808080; opacity: 1; }
`;

const FormulaBar = styled.div`
  display: flex;
  align-items: center;
  height: 20px;
  flex: none;
  margin-right: -4px;
  font-size: 14px;
`;

const NameBox = styled.input`
  width: 107px;
  height: 18px;
  background: #fff;
  text-align: center;
`;

const FxButton = styled.button`
  width: 81px;
  display: flex;
  align-items: center;
  justify-content: space-between;
  padding: 0 4px 0 6px;
  font: italic bold 13px/16px ${serif};
`;

const FormulaInput = styled.input`
  flex: 1;
  height: 18px;
  padding-left: 13px;
  background: #fff;
  font-size: 16px;
`;

const SheetArea = styled.div`
  position: relative;
  flex: 1;
  min-height: 0;
  display: flex;
  margin-top: 1px;
  border-top: 1px solid #6c6a66;
`;

const SheetView = styled.div`
  flex: 1;
  min-width: 0;
  overflow: hidden;
  background: #fff;
`;

const Sheet = styled.table`
  width: 1453px;
  font: 16px/18px ${serif};
  thead th {
    height: 21px;
    text-align: center;
    background: #d4d0c8;
    border-right: 1px solid #8c8a84;
    border-bottom: 1px solid #6c6a66;
    font-size: 15px;
  }
  thead th[data-on], tbody th[data-on] { background: #b6bdd2; border-color: #0a246a; }
  tbody th {
    height: 19px;
    text-align: center;
    background: #d4d0c8;
    border-right: 1px solid #6c6a66;
    border-bottom: 1px solid #6c6a66;
  }
  td {
    height: 19px;
    overflow: hidden;
    white-space: nowrap;
    line-height: 18px;
    border-right: 1px solid #c0c0c0;
    border-bottom: 1px solid #c0c0c0;
  }
`;

const InkCell = styled.td`
  && {
    padding-left: 2px;
    border-right: 2px solid #000;
    border-bottom: 1px solid #000;
    background: ${(p) => (p.$flag ? "linear-gradient(135deg, #107c20 3px, #fff 4px)" : "#fff")};
    outline: ${(p) => (p.$on ? "2px solid #000" : "0")};
    outline-offset: -1px;
  }
`;

const CellColumns = styled.span`
  display: grid;
  height: 18px;
  grid-template-columns: ${(p) => (p.$head ? "56px 56px 72px 88px 88px 88px 1fr" : "56px 56px 72px 88px 80px 96px 1fr")};
`;

const SheetScroll = styled.div`
  width: 16px;
  flex: none;
  padding-top: 6px;
  background: #eae8e3;
  border-top: 3px double #555;
  button { display: flex; align-items: center; justify-content: center; width: 16px; height: 16px; background: #d4d0c8; border: 1px solid; border-color: #fff #404040 #404040 #fff; }
`;

const Note = styled.div`
  position: absolute;
  left: 810px;
  top: 59px;
  width: 260px;
  height: 104px;
  padding: 1px 3px;
  border: 3px solid #e00c0c;
  background: #fff;
  box-shadow: 2px 3px 5px rgba(0, 0, 0, 0.6);
  font: bold 16px/20px ${serif};
  white-space: nowrap;
`;

const Strokes = styled.svg`
  position: absolute;
  left: 179px;
  top: 54px;
  filter: drop-shadow(2px 3px 2px rgba(0, 0, 0, 0.5));
`;

const alignLines = (d) => <path d={d} stroke="#000" strokeWidth="1.500" />;

const page = <path d="M3 1.500h7l3 3v10H3z" fill="#fff" stroke="#5878b0" />;

const officeIcons = {
  excel: <><path d="M1 1h14v14H1z" fill="#e8f4e8" stroke="#1e6b28" strokeWidth="1.500" /><path d="M4 4l7 8M11 4l-7 8" stroke="#1e7b30" strokeWidth="2.500" /></>,
  book: <><path d="M6 3h9v12H6z" fill="#dce8fa" stroke="#4468a8" /><path d="M8 10h6M8 12.500h6" stroke="#4468a8" /><path d="M1 1h9v9H1z" fill="#e8f4e8" stroke="#1e6b28" /><path d="M3 3l5 5M8 3L3 8" stroke="#1e7b30" strokeWidth="2" /></>,
  new: page,
  open: <><path d="M1 4h5l1 2h6v8H1z" fill="#e8b840" stroke="#8c6410" /><path d="M3 8h12l-3 6H1z" fill="#fce08c" stroke="#8c6410" /><path d="M9 3q3-2 5 1" fill="none" stroke="#3060a0" /></>,
  save: <><path d="M1.500 1.500h13v13h-13z" fill="#5060c8" stroke="#283080" /><path d="M4 2h8v6H4z" fill="#e4e8fa" /><path d="M5 10h6v4H5z" fill="#c8ccdc" /></>,
  perm: <>{page}<circle cx="11" cy="11" r="4" fill="#e04020" /><path d="M8.500 11h5" stroke="#fff" strokeWidth="1.500" /></>,
  mail: <><path d="M4 1h9v8H4z" fill="#fff" stroke="#7080a0" /><path d="M1 7h13v8H1z" fill="#e4e8f0" stroke="#7080a0" /><path d="M1 7l6 5 7-5" fill="none" stroke="#7080a0" /></>,
  print: <><path d="M4 1h8l-1 6H3z" fill="#fff" stroke="#7080a0" /><path d="M1 7h13l1 2v4H1z" fill="#b8c0cc" stroke="#506078" /><path d="M4 12h9v3H4z" fill="#e8f0e8" stroke="#506078" /><path d="M10 9h3v2h-3z" fill="#20a030" /></>,
  preview: <>{page}<circle cx="9" cy="9" r="3.500" fill="#cce4fa" stroke="#506078" /><path d="M11 12l4 3" stroke="#b08030" strokeWidth="2" /></>,
  spell: <><path d="M1 2h7M4.500 0v9M1 5h7M9 8l3-7 3 7M10 6h4" fill="none" stroke="#222" strokeWidth="1.300" /><path d="M4 11l3 4 7-8" fill="none" stroke="#3068d0" strokeWidth="2" /></>,
  research: <><path d="M1 1h3v13H1z" fill="#c070d0" /><path d="M4 1h3v13H4z" fill="#5080d0" /><path d="M7 1h4v13H7z" fill="#e0b840" /><circle cx="10" cy="9" r="3.500" fill="#dcecfa" stroke="#506078" /><path d="M12 12l3 3" stroke="#b08030" strokeWidth="2" /></>,
  cut: <><path d="M5 1l4 9M11 1L7 10" stroke="#506090" strokeWidth="1.500" /><circle cx="5.500" cy="12" r="2" fill="none" stroke="#3060c0" strokeWidth="1.500" /><circle cx="10.500" cy="12" r="2" fill="none" stroke="#3060c0" strokeWidth="1.500" /></>,
  copy: <><path d="M1.500 1.500h7v9h-7z" fill="#fff" stroke="#4468a8" /><path d="M3 4h4M3 6h4" stroke="#4468a8" /><path d="M6.500 5.500h8v9h-8z" fill="#e4eefc" stroke="#4468a8" /><path d="M8 8h5M8 10h5M8 12h5" stroke="#4468a8" /></>,
  paste: <><path d="M1.500 2.500h11v12h-11z" fill="#d89c40" stroke="#80581c" /><path d="M4 1h6v3H4z" fill="#c8ccd4" stroke="#606060" /><path d="M7 6h8v9H7z" fill="#fff" stroke="#4468a8" /></>,
  brush: <><path d="M9 6l5-5 2 2-4 5z" fill="#5080c0" stroke="#385888" /><path d="M1 7l6-2 6 6-6 5z" fill="#f4d070" stroke="#8c6820" /><path d="M7 5l6 6" stroke="#7a7a9a" strokeWidth="2" /></>,
  undo: <><path d="M4 6q8-5 9 2 0 4-4 7" fill="none" stroke="#3878d0" strokeWidth="2.500" /><path d="M1 2v7h7z" fill="#3878d0" /></>,
  redo: <><path d="M12 6q-8-5-9 2 0 4 4 7" fill="none" stroke="#b0b0b0" strokeWidth="2.500" /><path d="M15 2v7H8z" fill="#b0b0b0" /></>,
  link: <><circle cx="7.500" cy="6.500" r="6" fill="#58b8e0" stroke="#285890" /><path d="M4 2q5 0 4 4t-4 3zM10 5l3-1v5z" fill="#40a040" /><path d="M5 13h5M9 13h5" stroke="#405890" strokeWidth="4" strokeLinecap="round" /><path d="M5 13h8" stroke="#dce8f8" strokeWidth="1.500" /></>,
  sum: <path d="M12 4V2H4l4 6-4 6h8v-2" fill="none" stroke="#222" strokeWidth="1.700" />,
  chart: <><path d="M1 15V5l3-2v12z" fill="#4070d0" /><path d="M5 15V1h4v14z" fill="#e8c030" stroke="#806010" /><path d="M10 15V5h4v10z" fill="#e06020" stroke="#803010" /><path d="M0 15.500h16" stroke="#555" /></>,
  draw: <><path d="M5 6l5-5 5 3v7l-5 4-5-4z" fill="#90a8e0" stroke="#4058a0" /><circle cx="11" cy="6" r="3" fill="#e0c060" stroke="#806820" /><path d="M1 9h7v5H1z" fill="#b0c4ec" stroke="#4058a0" /></>,
  help: <><circle cx="8" cy="8" r="7" fill="#3c78d8" stroke="#c8dcf8" /><text x="5" y="12" fontSize="11" fontWeight="bold" fontFamily="Liberation Sans" fill="#fff">?</text></>,
  left: alignLines("M1 2h14M1 5h9M1 8h14M1 11h9M1 14h14"),
  center: alignLines("M1 2h14M4 5h8M1 8h14M4 11h8M1 14h14"),
  right: alignLines("M1 2h14M6 5h9M1 8h14M6 11h9M1 14h14"),
  merge: <><path d="M1 1.500h14v13H1zM1 5h14M1 11h14M8 1v4M8 11v4" fill="#fff" stroke="#4468a8" /><text x="5" y="11" fontSize="8" fontWeight="bold" fontFamily="Liberation Sans">a</text><path d="M1 8h3M12 8h3" stroke="#000" /></>,
  money: <><path d="M1 1h14v8H1z" fill="#5078d0" stroke="#284890" /><circle cx="7" cy="5" r="2.500" fill="#c8d8f8" /><ellipse cx="11" cy="9" rx="3.500" ry="2" fill="#f0c840" stroke="#907010" /><ellipse cx="11" cy="12" rx="3.500" ry="2" fill="#f0c840" stroke="#907010" /></>,
  inc: <><text x="8" y="7" fontSize="8" fontFamily="Liberation Sans">.0</text><text x="4" y="15" fontSize="8" fontFamily="Liberation Sans">.00</text><path d="M0 4l4-3v6zM3 4h4" fill="#3060c0" stroke="#3060c0" /></>,
  dec: <><text x="4" y="7" fontSize="8" fontFamily="Liberation Sans">.00</text><text x="8" y="15" fontSize="8" fontFamily="Liberation Sans">.0</text><path d="M7 12l-4-3v6zM0 12h4" fill="#3060c0" stroke="#3060c0" /></>,
  outdent: <>{alignLines("M1 2h14M8 5h7M8 8h7M8 11h7M1 14h14")}<path d="M1 8l4-3v6zM5 8h2" fill="#3060c0" stroke="#3060c0" /></>,
  indent: <>{alignLines("M1 2h14M8 5h7M8 8h7M8 11h7M1 14h14")}<path d="M6 8L2 5v6zM0 8h2" fill="#3060c0" stroke="#3060c0" /></>,
  borders: <><path d="M2 1.500h12M2 7.500h12M2.500 1v13M8 1v13M13.500 1v13" stroke="#777" strokeDasharray="1 1" /><path d="M2 14.500h12" stroke="#222" /></>,
  fill: <><path d="M3 6l5-5 5 5-5 5z" fill="#dce8fa" stroke="#4468a8" /><path d="M13 6q3 2 1 5z" fill="#4078d0" /><path d="M1 12h14v4H1z" fill="#ffff00" /></>,
  color: <><text x="2" y="11" fontSize="14" fontWeight="bold" fontFamily="Liberation Serif" fill="#284890">A</text><path d="M1 12h14v4H1z" fill="#ff0000" /></>,
  pdf: <><path d="M3 1h8l3 3v11H3z" fill="#fff" stroke="#999" /><path d="M1 2h8v4H1z" fill="#d81818" /><path d="M5 13q4-4 4-7 1 5 5 5-5-1-9 2z" fill="none" stroke="#d81818" strokeWidth="1.300" /></>,
  pdfMail: <><path d="M2 3h8l3 3v9H2z" fill="#fff" stroke="#999" /><path d="M0 4h7v4H0z" fill="#d81818" /><path d="M7 1h8v5h-4l-2 2V6H7z" fill="#f8d840" stroke="#a08010" /><path d="M4 14q4-4 4-7 0 4 4 4" fill="none" stroke="#d81818" strokeWidth="1.300" /></>,
};

const Icon = ({ name }) => <svg width="16" height="16" viewBox="0 0 16 16">{officeIcons[name]}</svg>;

const SortIcon = ({ top, bottom }) => (
  <svg width="16" height="18" viewBox="0 0 16 18" fontFamily="Liberation Sans" fontSize="9" fontWeight="bold">
    <text x="1" y="8" fill={top === "A" ? "#3050b0" : "#a03030"}>{top}</text>
    <text x="1" y="17" fill={top === "A" ? "#a03030" : "#3050b0"}>{bottom}</text>
    <path d="M12.500 2v12M10 12h5l-2.500 4z" stroke="#000" />
  </svg>
);

const Tb = ({ name, on }) => <IconButton aria-label={name} $on={on}><Icon name={name} /></IconButton>;
const Drop = () => <DropButton aria-label="More"><Arrow /></DropButton>;
const End = () => <BarEnd><svg width="7" height="7"><path d="M0 .5h7M0 3h7L3.500 6.500z" stroke="#fff" strokeWidth=".6" fill="#000" /></svg></BarEnd>;

const Picker = ({ label, value, w }) => (
  <Combo $w={w}>
    <select aria-label={label} defaultValue={value}><option>{value}</option></select>
    <Arrow />
  </Combo>
);

const columns = ["A", "B", "C", "D", "E", "F", "G", "H", "I", "J", "K", "L"];

const ExcelWindow = () => (
  <ExcelFrame>
    <ExcelTitle>
      <Icon name="excel" />
      Microsoft Excel - 6V050LDRA0制作单.xls
      <ClassicButtons />
    </ExcelTitle>
    <BarArea>
      <BarRow $gap>
        <ToolBar>
          <Grip />
          <Tb name="new" /><Tb name="open" /><Tb name="save" /><Tb name="perm" /><Tb name="mail" />
          <Sep />
          <Tb name="print" /><Tb name="preview" />
          <Sep />
          <Tb name="spell" /><Tb name="research" />
          <Sep />
          <Tb name="cut" /><Tb name="copy" /><Tb name="paste" /><Drop /><Tb name="brush" />
          <Sep />
          <Tb name="undo" /><Drop /><Tb name="redo" /><Drop />
          <Sep />
          <Tb name="link" /><Tb name="sum" /><Drop />
          <IconButton aria-label="Sort ascending"><SortIcon top="A" bottom="Z" /></IconButton>
          <IconButton aria-label="Sort descending"><SortIcon top="Z" bottom="A" /></IconButton>
          <Sep />
          <Tb name="chart" /><Tb name="draw" />
          <Picker label="Zoom" value="100%" w={63} />
          <Tb name="help" />
          <End />
        </ToolBar>
        <ToolBar>
          <Grip />
          <Picker label="Font" value="宋体" w={149} />
          <Picker label="Size" value="12" w={45} />
          <Sep />
          <IconButton aria-label="Bold"><b>B</b></IconButton>
          <IconButton aria-label="Italic"><b><i>I</i></b></IconButton>
          <IconButton aria-label="Underline"><b><u>U</u></b></IconButton>
          <Sep />
          <Tb name="left" on /><Tb name="center" /><Tb name="right" /><Tb name="merge" />
          <Sep />
          <Tb name="money" />
          <IconButton>%</IconButton>
          <IconButton><b>,</b></IconButton>
          <Tb name="inc" /><Tb name="dec" />
          <Sep />
          <Tb name="outdent" /><Tb name="indent" />
          <Sep />
          <Tb name="borders" /><Drop /><Tb name="fill" /><Drop /><Tb name="color" /><Drop />
          <End />
        </ToolBar>
      </BarRow>
      <BarRow $h={23}>
        <Grip />
        <Icon name="book" />
        <MenuStrip>
          {excelMenu.map(([name, key]) => <button key={name}>{name}(<u>{key}</u>)</button>)}
        </MenuStrip>
        <AskBox aria-label="帮助" placeholder="键入需要帮助的问题" />
        <DropButton aria-label="More help"><Arrow /></DropButton>
        <MdiButtons />
      </BarRow>
      <BarRow $gap>
        <ToolBar>
          <Grip />
          <Tb name="pdf" /><Tb name="pdfMail" />
          <End />
        </ToolBar>
      </BarRow>
    </BarArea>
    <FormulaBar>
      <NameBox aria-label="Name box" defaultValue="A56" />
      <FxButton aria-label="Insert function"><Arrow />fx</FxButton>
      <FormulaInput aria-label="Formula" defaultValue="(1/2)" />
    </FormulaBar>
    <SheetArea>
      <SheetView>
        <Sheet>
          <Cols widths={[34, 149, 550, ...Array(10).fill(72)]} />
          <thead>
            <tr>
              <th />
              {columns.map((c) => <th key={c} data-on={c === "A" ? "" : undefined}>{c}</th>)}
            </tr>
          </thead>
          <tbody>
            {sheetRows.map((row) => (
              <tr key={row.n}>
                <th data-on={row.n === 56 ? "" : undefined}>{row.n}</th>
                <InkCell $on={row.n === 56} $flag={row.flag}>{row.a}</InkCell>
                <InkCell>
                  {row.head || row.nums ? (
                    <CellColumns $head={!!row.head}>
                      {(row.head || row.nums).map((v, i) => <span key={i}>{v}</span>)}
                    </CellColumns>
                  ) : row.b}
                </InkCell>
                {columns.slice(2).map((c) => <td key={c} />)}
              </tr>
            ))}
          </tbody>
        </Sheet>
      </SheetView>
      <SheetScroll>
        <button aria-label="Scroll up"><svg width="7" height="4"><path d="M0 4h7L3.500 0z" /></svg></button>
      </SheetScroll>
      <Strokes width="120" height="60" fill="none" stroke="#e01010" strokeWidth="3" strokeLinecap="round">
        <path d="M56 10q8-4 20-3t31 3M7 45h42" />
      </Strokes>
      <Note>2/5层是1oz基铜，补偿错误！</Note>
    </SheetArea>
  </ExcelFrame>
);

const steel = "#f0f0f0 #7a7a7a #7a7a7a #f0f0f0";

const App = () => (
  <Desktop>
    <GlobalStyle />
    <GenesisTitle>
      <svg width="14" height="16" viewBox="0 0 14 16">
        <path d="M0 0h14v16H0z" fill="#fff" stroke="#333" />
        <path d="M0 0h14v3H0z" fill="#101080" />
        <path d="M3 5l7 8M10 5l-7 8" stroke="#c8b820" strokeWidth="3" />
      </svg>
      Graphic Editor 9.07b2 (00@HY-HYCAM-PC066 - Windows, pid:2180)
      <ClassicButtons />
    </GenesisTitle>
    <GenesisHeader>
      <MenuBar>
        {genesisMenu.map(([a, key, b]) => <MenuItem key={a + key + b}>{a}<u>{key}</u>{b}</MenuItem>)}
        <MenuItem>Help</MenuItem>
      </MenuBar>
      <Brand>
        <Logo />
        <BrandName>Genesis 2000<em>Graphic Editor</em></BrandName>
        <Clock>07 Feb 2015<br />03:26 PM</Clock>
      </Brand>
    </GenesisHeader>
    <GenesisBody>
      <LeftPanel>
        <JobLine>Job : 6v050ldra0</JobLine>
        <JobLine>Step: cam</JobLine>
        <MatrixFrame><MatrixButton>Job Matrix ...</MatrixButton></MatrixFrame>
        <LayerBox>
          {layerGroups.map((group) => (
            <LayerGroup key={group[0][0]}>
              {group.map(([name, tone, dot]) => (
                <LayerRow key={name}>
                  <LayerCheck type="checkbox" $active={name === "sig2b"} />
                  <LayerDot $color={dot} />
                  <LayerName $tone={tone}>
                    {name}
                    {name === "sig2b" && <svg width="6" height="7"><path d="M.5.5h5v6h-5zM3 0v7M0 3.500h6" fill="none" stroke="#000" /></svg>}
                  </LayerName>
                </LayerRow>
              ))}
            </LayerGroup>
          ))}
        </LayerBox>
        <Selected><span>Selected : 0</span></Selected>
      </LeftPanel>
      <BoardView />
      <ToolColumn>
        <ToolGrid>
          {["up", "down", "home", "layout", "left", "right", "undo", "trace", "fit", "expand", "ratio", "help"].map((n) => (
            <GenesisTool key={n} icon={n} />
          ))}
        </ToolGrid>
        <ToolStack>
          <GenesisTool icon="signal" $edge="#e01818" />
          <GenesisTool icon="pad" $bg="#fff" $edge="#fff" />
          <GenesisTool icon="points" $bg="#c4c4c4" $edge={steel} />
          <GenesisTool icon="mirror" $bg="#c4c4c4" $edge={steel} />
          <GenesisTool icon="copy" $bg="#c4c4c4" $edge={steel} />
          <GenesisTool icon="curve" $bg="#c4c4c4" $edge={steel} />
          <GenesisTool icon="route" $bg="#fcc64e" $edge="#fff0c0 #94701c #94701c #fff0c0" />
        </ToolStack>
        <Radar>
          <path d="M0 169.500H160" stroke="#3f7f20" />
          <path d="M0 202H160V232H0z" fill="#f00" />
          <path d="M100 204H145V227H100" fill="none" stroke="#20e0f0" strokeWidth="2" />
        </Radar>
      </ToolColumn>
    </GenesisBody>
    <StatusBar>
      <StatusButton aria-label="Snap line">
        <svg width="20" height="22" fill="none" stroke="#000"><path d="M.5.500h19v21H.5zM4.500 3v14.500H16M6 5l9 10M6 9V5h4M15 11v4h-4" /></svg>
      </StatusButton>
      <StatusButton aria-label="Angle">
        <svg width="20" height="22" fill="none" stroke="#000"><path d="M.5.500h19v21H.5zM3 17.500h14M4 17L16 4M6 5v4h3M12 12l4 4m0-4l-4 4" /></svg>
      </StatusButton>
      <StatusButton aria-label="Grid" $on>
        <svg width="18" height="19" fill="none" stroke="#000"><path d="M.5.500h17v18H.5zM3 7l4-4h8v12H3zM9 3v12M3 9.500h12" /></svg>
      </StatusButton>
      <CoordLabel htmlFor="xy">X Y :</CoordLabel>
      <CoordInput id="xy" />
      <StatusButton aria-label="Alert" $on>
        <svg width="18" height="19"><path d="M.5.500h17v18H.5z" fill="none" stroke="#000" /><path d="M8 3h2v9H8zM8 14h2v2H8z" /></svg>
      </StatusButton>
      <StatusText>&lt;M1&gt; - Select fi</StatusText>
    </StatusBar>
    <MessageBar><div /></MessageBar>
    <ProcessWindow />
    <ExcelWindow />
  </Desktop>
);

export default App;
